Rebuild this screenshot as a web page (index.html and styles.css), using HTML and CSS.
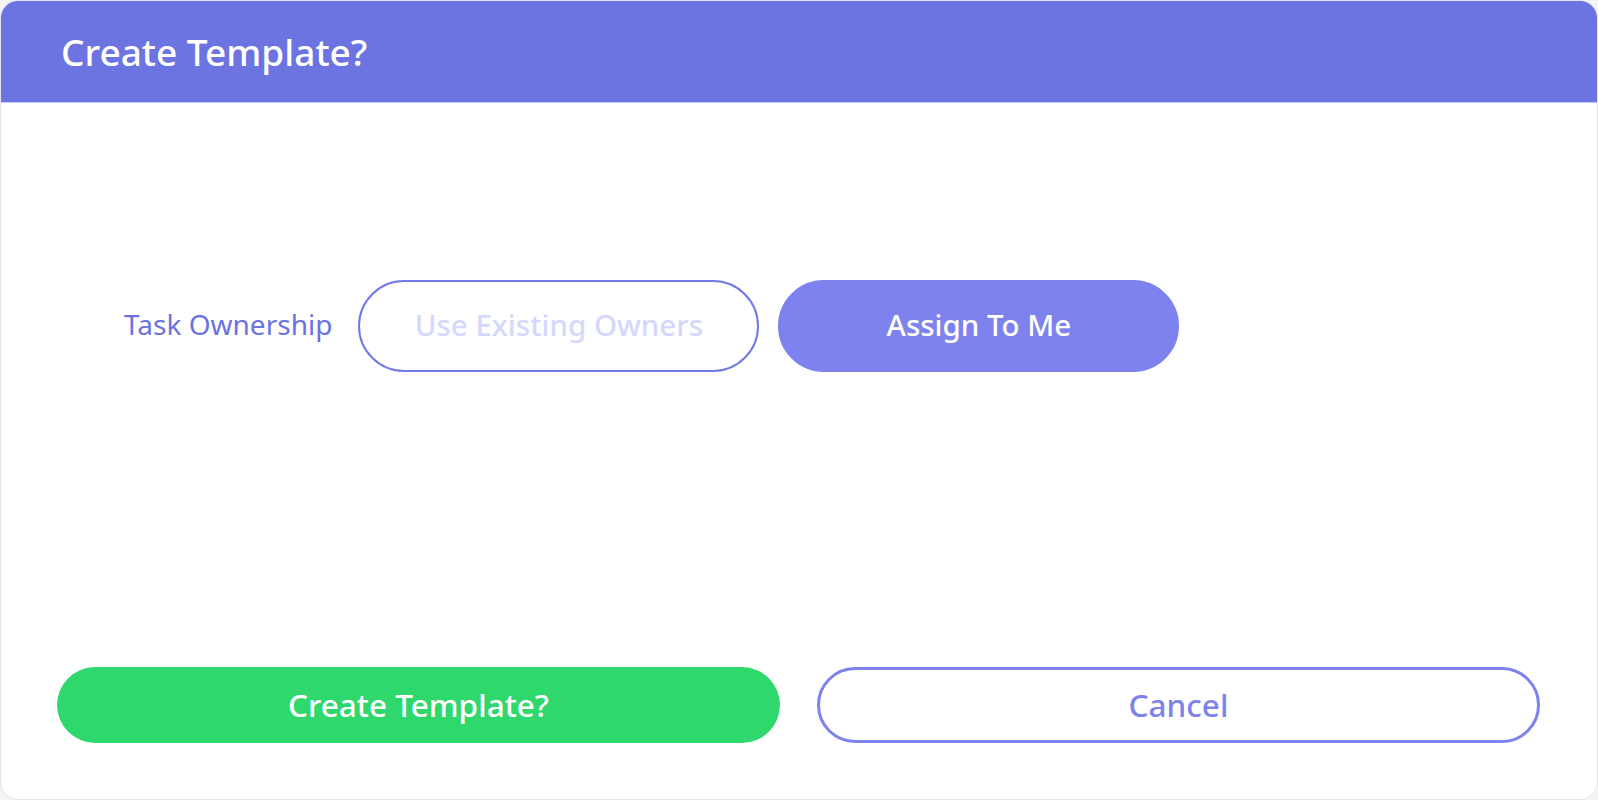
FILE: index.html
```html
<!DOCTYPE html>
<html lang="en">
<head>
<meta charset="utf-8">
<title>Create Template?</title>
<link rel="stylesheet" href="styles.css">
</head>
<body>
<div class="dialog">
  <header class="dialog-header">
    <h1 class="dialog-title">Create Template?</h1>
  </header>
  <main class="dialog-body">
    <div class="field-row">
      <span class="field-label">Task Ownership</span>
      <div class="toggle-group">
        <button class="toggle">Use Existing Owners</button>
        <button class="toggle toggle-active">Assign To Me</button>
      </div>
    </div>
  </main>
  <footer class="dialog-footer">
    <button class="btn btn-primary">Create Template?</button>
    <button class="btn btn-outline">Cancel</button>
  </footer>
</div>
</body>
</html>
```

FILE: styles.css
```css
* { box-sizing: border-box; }
html, body {
  margin: 0;
  padding: 0;
  background: #f4f4f4;
}
body {
  font-family: "Noto Sans", "Open Sans", sans-serif;
}
.dialog {
  width: 1598px;
  height: 800px;
  background: #ffffff;
  border: 1px solid #e4e4e8;
  border-radius: 18px;
  overflow: hidden;
  display: flex;
  flex-direction: column;
}
.dialog-header {
  height: 102px;
  background: #6c74e1;
  display: flex;
  align-items: center;
  padding-left: 60px;
  border-bottom: 1px solid #c9ccf5;
}
.dialog-title {
  margin: 0;
  color: #ffffff;
  font-size: 37px;
  font-weight: 500;
}
.dialog-body {
  flex: 1;
  padding: 177px 0 0 123px;
}
.field-row {
  display: flex;
  align-items: center;
}
.field-label {
  color: #6b73e0;
  font-size: 28px;
  margin-right: 26px;
  padding-bottom: 4px;
}
.toggle-group {
  display: flex;
  gap: 19px;
}
.toggle {
  width: 401px;
  height: 92px;
  border-radius: 46px;
  border: 2px solid #7379e7;
  background: #ffffff;
  color: #d5d8fc;
  font-family: inherit;
  font-size: 29.5px;
  font-weight: 500;
  padding: 0 0 3px;
}
.toggle-active {
  background: #7d82ee;
  border-color: #7d82ee;
  color: #ffffff;
}
.dialog-footer {
  display: grid;
  grid-template-columns: 1fr 1fr;
  gap: 37px;
  padding: 0 57px 56px 56px;
}
.btn {
  width: 100%;
  height: 76px;
  border-radius: 38px;
  font-family: inherit;
  font-size: 31.5px;
  font-weight: 500;
  padding: 0 0 2px;
}
.btn-primary {
  background: #2fd86c;
  border: none;
  color: #ffffff;
}
.btn-outline {
  background: #ffffff;
  border: 3px solid #7d82ee;
  color: #7d82ee;
}
```
